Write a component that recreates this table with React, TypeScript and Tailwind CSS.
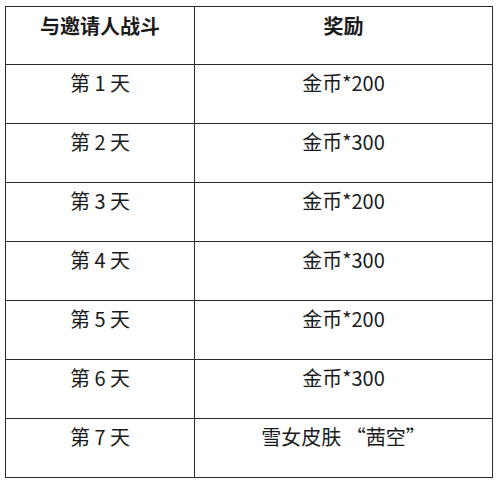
const rows: [string, string][] = [
  ["第 1 天", "金币*200"],
  ["第 2 天", "金币*300"],
  ["第 3 天", "金币*200"],
  ["第 4 天", "金币*300"],
  ["第 5 天", "金币*200"],
  ["第 6 天", "金币*300"],
  ["第 7 天", "雪女皮肤 “茜空”"],
];

export default function App() {
  return (
    <div
      className="h-[484px] w-[500px] bg-white pl-[5px] pt-[6px] text-[#1a1a1a]"
      style={{ fontFamily: '"Noto Sans CJK SC", "Liberation Sans", sans-serif' }}
    >
      <table className="w-[488px] table-fixed border-collapse border border-[#2b2b2b] text-[20px] leading-[24px]">
        <colgroup>
          <col className="w-[189px]" />
          <col />
        </colgroup>
        <thead>
          <tr className="h-[58px]">
            <th className="border border-[#2b2b2b] pb-[20px] text-center font-bold">与邀请人战斗</th>
            <th className="border border-[#2b2b2b] pb-[20px] text-center font-bold">奖励</th>
          </tr>
        </thead>
        <tbody>
          {rows.map(([day, reward]) => (
            <tr key={day} className="h-[59px]">
              <td className="border border-[#2b2b2b] pb-[22px] text-center">{day}</td>
              <td className="border border-[#2b2b2b] pb-[22px] text-center">{reward}</td>
            </tr>
          ))}
        </tbody>
      </table>
    </div>
  );
}
